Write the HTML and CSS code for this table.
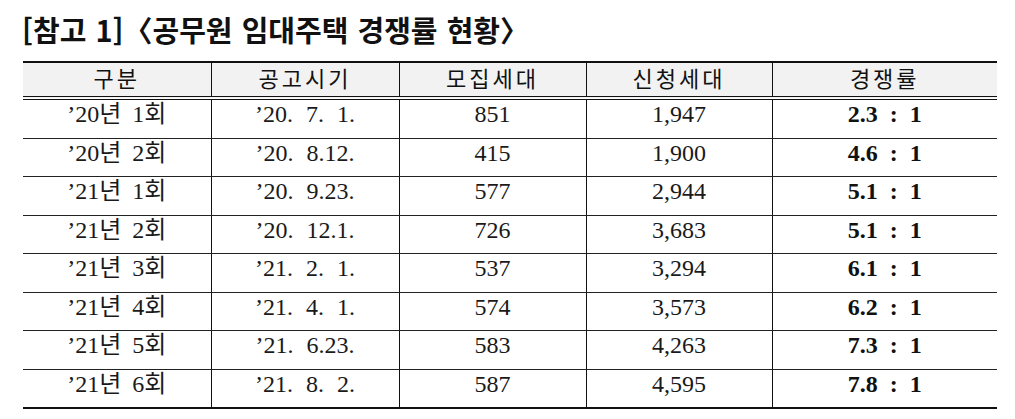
FILE: index.html
```html
<!DOCTYPE html>
<html lang="ko">
<head>
<meta charset="utf-8">
<link rel="stylesheet" href="styles.css">
</head>
<body>
<div class="page">
  <h1 class="title">[참고 1]〈공무원 임대주택 경쟁률 현황〉</h1>
  <table class="stats">
    <colgroup>
      <col class="c1"><col class="c2"><col class="c3"><col class="c4"><col class="c5">
    </colgroup>
    <thead>
      <tr><th>구분</th><th>공고시기</th><th>모집세대</th><th>신청세대</th><th>경쟁률</th></tr>
    </thead>
    <tbody>
      <tr><td class="round">’20년 1회</td><td class="date">’20. 7. 1.</td><td>851</td><td>1,947</td><td class="ratio">2.3 : 1</td></tr>
      <tr><td class="round">’20년 2회</td><td class="date">’20. 8.12.</td><td>415</td><td>1,900</td><td class="ratio">4.6 : 1</td></tr>
      <tr><td class="round">’21년 1회</td><td class="date">’20. 9.23.</td><td>577</td><td>2,944</td><td class="ratio">5.1 : 1</td></tr>
      <tr><td class="round">’21년 2회</td><td class="date">’20. 12.1.</td><td>726</td><td>3,683</td><td class="ratio">5.1 : 1</td></tr>
      <tr><td class="round">’21년 3회</td><td class="date">’21. 2. 1.</td><td>537</td><td>3,294</td><td class="ratio">6.1 : 1</td></tr>
      <tr><td class="round">’21년 4회</td><td class="date">’21. 4. 1.</td><td>574</td><td>3,573</td><td class="ratio">6.2 : 1</td></tr>
      <tr><td class="round">’21년 5회</td><td class="date">’21. 6.23.</td><td>583</td><td>4,263</td><td class="ratio">7.3 : 1</td></tr>
      <tr><td class="round">’21년 6회</td><td class="date">’21. 8. 2.</td><td>587</td><td>4,595</td><td class="ratio">7.8 : 1</td></tr>
    </tbody>
  </table>
</div>
</body>
</html>
```
FILE: styles.css
```css
html, body {
  margin: 0;
  padding: 0;
  background: #ffffff;
}
.page {
  padding: 12px 18px 0 23px;
  color: #111;
}
.title {
  margin: 0 0 14px -1px;
  font-family: "Noto Sans CJK KR", sans-serif;
  font-weight: 700;
  font-size: 29px;
  line-height: 35px;
  letter-spacing: 0;
  word-spacing: 1px;
  color: #111;
}
.stats {
  width: 974px;
  border-collapse: collapse;
  table-layout: fixed;
  font-family: "Liberation Serif", "Noto Sans CJK KR", serif;
  font-size: 24px;
  color: #1a1a1a;
}
.c1 { width: 188px; }
.c2 { width: 188px; }
.c3 { width: 187px; }
.c4 { width: 186px; }
.c5 { width: 225px; }
.stats th {
  background: #f2f2f2;
  border-top: 2px solid #111;
  border-bottom: 4px double #111;
  border-left: 1px solid #111;
  height: 33px;
  padding: 0;
  vertical-align: top;
  font-family: "Noto Sans CJK KR", sans-serif;
  font-weight: 400;
  font-size: 22px;
  letter-spacing: 3px;
  line-height: 28px;
  text-align: center;
  color: #111;
}
.stats td {
  border-bottom: 1px solid #222;
  border-left: 1px solid #111;
  height: 37.5px;
  padding: 0;
  vertical-align: top;
  line-height: 28px;
  text-align: center;
  white-space: nowrap;
}
.stats td.round {
  word-spacing: 5px;
}
.stats td.date {
  word-spacing: 7px;
}
.stats th:first-child,
.stats td:first-child {
  border-left: none;
}
.stats tbody tr:last-child td {
  border-bottom: 2px solid #111;
}
.stats td.ratio {
  font-weight: 700;
  color: #111;
  word-spacing: 6px;
}
```
